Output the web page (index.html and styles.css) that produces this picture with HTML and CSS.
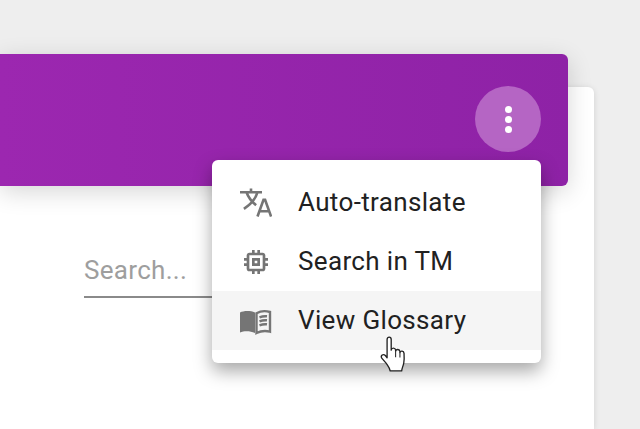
FILE: index.html
```html
<!DOCTYPE html>
<html lang="en">
<head>
  <meta charset="UTF-8" />
  <title>Glossary menu</title>
  <link rel="stylesheet" href="styles.css">
</head>
<body>
  <div class="page">
    <div class="header">
      <button class="more-btn">
        <span class="dot"></span>
        <span class="dot"></span>
        <span class="dot"></span>
      </button>
    </div>
    <div class="card">
      <div class="search">Search...</div>
    </div>

    <div class="menu">
      <div class="menu-item">
        <svg class="icon" viewBox="0 0 32 32">
          <g fill="none" stroke="#757575" stroke-width="2.6">
            <path d="M0 5.200h22M11 1.500v3.700M17.500 5.200c-1.800 6.400-6.500 12-13.600 16.600M6.500 5.200c1.600 4.600 5 9.200 9.600 13"/>
            <path d="M17.500 29.500 23.500 12.800h1.600l6 16.700M19.800 24.200h9"/>
          </g>
        </svg>
        <span class="label">Auto-translate</span>
      </div>
      <div class="menu-item">
        <svg class="icon" viewBox="0 0 24 24">
          <path fill="#757575" d="M15 9H9v6h6V9zm-2 4h-2v-2h2v2zm8-2V9h-2V7c0-1.100-.9-2-2-2h-2V3h-2v2h-2V3H9v2H7c-1.100 0-2 .9-2 2v2H3v2h2v2H3v2h2v2c0 1.100.9 2 2 2h2v2h2v-2h2v2h2v-2h2c1.100 0 2-.9 2-2v-2h2v-2h-2v-2h2zm-4 6H7V7h10v10z"/>
        </svg>
        <span class="label">Search in TM</span>
      </div>
      <div class="menu-item active">
        <svg class="icon" viewBox="0 0 32 32">
          <path fill="#757575" d="M0 7.500C3.500 5.800 10 5.300 15 7.600V28C10 25.800 4 25.800 0 27.600z"/>
          <g fill="none" stroke="#757575" stroke-width="2.400">
            <path d="M16.500 8.200C20 6.300 26 5.800 30 7v19.600c-4-1-9.500-.6-13.500 1.400z"/>
            <path d="M19.500 12.300c2.500-1 5-1.300 7.500-1M19.500 16.300c2.500-1 5-1.300 7.500-1M19.500 20.300c2.500-1 5-1.300 7.500-1"/>
          </g>
        </svg>
        <span class="label">View Glossary</span>
      </div>
    </div>

    <svg class="pointer" viewBox="0 0 24.500 37">
      <path fill="#fff" stroke="#222" stroke-width="1.300" stroke-linejoin="round" d="M6.500 3.300c0-3 4-3 4 0v10.500c.3-2.600 4-2.600 4.300 0v1c.4-2.300 4-2.300 4.200.3v1c.5-2 3.800-1.800 4 .8 .2 3 .2 6.500-.3 9.500-.5 2.800-1.500 4-2 7.500H9.500c-.5-3-2-4.500-4-7.500L1.300 21.500c-1.500-2.500 1.500-4.500 3.500-2.500l1.700 2.200z"/>
      <path fill="none" stroke="#222" stroke-width="1" d="M14.800 14.800v6M19 16v5"/>
    </svg>
  </div>
</body>
</html>
```

FILE: styles.css
```css
html, body {
  margin: 0;
  height: 100%;
  overflow: hidden;
}

body {
  background: #eeeeee;
  font-family: 'Roboto', sans-serif;
}

.page {
  position: relative;
  height: 429px;
  padding-top: 54px;
  box-sizing: border-box;
}

.header {
  position: relative;
  z-index: 2;
  width: 568px;
  height: 132px;
  box-sizing: border-box;
  padding: 32px 27px 0 0;
  display: flex;
  justify-content: flex-end;
  align-items: flex-start;
  background: linear-gradient(to right, #9c27b0, #8e22a6);
  border-radius: 0 6px 6px 0;
  box-shadow: 0 6px 24px rgba(0, 0, 0, 0.16);
}

.more-btn {
  width: 66px;
  height: 66px;
  padding: 0;
  border: none;
  border-radius: 50%;
  background: #b565c4;
  display: flex;
  flex-direction: column;
  align-items: center;
  justify-content: center;
  gap: 3px;
}

.dot {
  width: 7px;
  height: 7px;
  border-radius: 50%;
  background: #fff;
}

.card {
  width: 594px;
  height: 342px;
  margin-top: -99px;
  padding: 167px 0 0 84px;
  box-sizing: border-box;
  background: #fff;
  border-radius: 0 6px 0 0;
  box-shadow: 0 1px 6px rgba(0, 0, 0, 0.12);
}

.search {
  width: 200px;
  height: 42px;
  line-height: 32px;
  font-size: 26px;
  letter-spacing: 0.3px;
  color: #9e9e9e;
  border-bottom: 2px solid #8a8a8a;
}

.menu {
  position: absolute;
  z-index: 3;
  left: 212px;
  top: 160px;
  width: 329px;
  padding: 13px 0;
  background: #fff;
  border-radius: 6px;
  box-shadow: 0 8px 18px rgba(0, 0, 0, 0.35);
}

.menu-item {
  height: 59px;
  display: flex;
  align-items: center;
  gap: 26px;
  padding-left: 28px;
  font-size: 26px;
  letter-spacing: 0.35px;
  color: #212121;
}

.menu-item.active {
  background: #f5f5f5;
}

.label {
  padding-bottom: 2px;
}

.icon {
  width: 32px;
  height: 32px;
  flex-shrink: 0;
}

.pointer {
  position: absolute;
  z-index: 4;
  left: 379px;
  top: 336px;
  width: 28px;
  height: 38px;
}
```
